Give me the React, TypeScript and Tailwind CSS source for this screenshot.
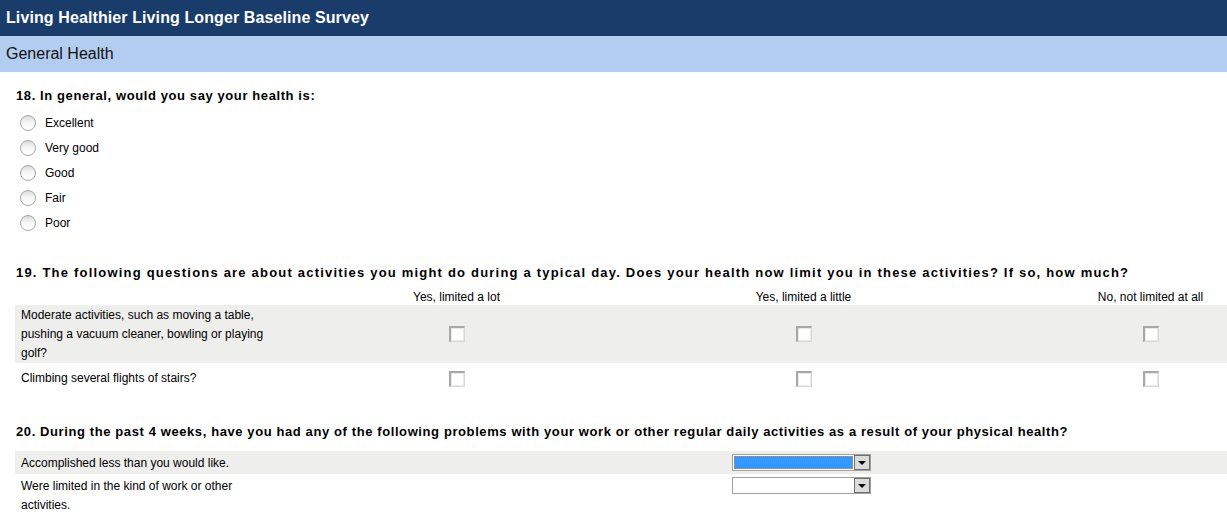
import React from "react";

const Radio = () => (
  <span className="inline-block w-[16px] h-[16px] rounded-full border border-[#a8a8a8] bg-gradient-to-b from-[#dcdcdc] via-[#f7f7f7] to-[#ffffff] shrink-0" />
);

const Check = () => (
  <span className="inline-block w-[16px] h-[16px] border-t-2 border-l-2 border-b border-r border-t-[#a8a8a8] border-l-[#a8a8a8] border-b-[#d8d8d8] border-r-[#d8d8d8] bg-white">
    <span className="block w-full h-full border border-[#eaeaea]" />
  </span>
);

const Select = ({ active }: { active?: boolean }) => (
  <div className="w-[139px] h-[17px] border border-[#a0a0a0] bg-white flex items-stretch box-border">
    <div className="flex-1 p-[1px]">
      {active ? (
        <div className="w-full h-full bg-[#3399ff] border border-dotted border-[#e8812a]" />
      ) : null}
    </div>
    <div className="w-[16px] bg-[#dcdcdc] border border-[#6f6f6f] flex items-center justify-center">
      <svg width="8" height="4" viewBox="0 0 8 4">
        <polygon points="0,0 8,0 4,4" fill="#000" />
      </svg>
    </div>
  </div>
);

export default function App() {
  const opts = ["Excellent", "Very good", "Good", "Fair", "Poor"];
  return (
    <div className="w-[1227px] h-[523px] overflow-hidden bg-white text-black font-['Liberation_Sans',Arial,sans-serif]">
      <div className="h-[36px] bg-[#1a3c6a] flex items-center px-[6px]">
        <span className="text-white font-bold text-[16px] tracking-[0.1px]">Living Healthier Living Longer Baseline Survey</span>
      </div>
      <div className="h-[36px] bg-[#b3cdf1] flex items-center px-[6px]">
        <span className="text-[16px] text-[#111]">General Health</span>
      </div>

      <div className="pl-[16px] pt-[16px]">
        <div className="text-[13px] font-bold leading-[16px] tracking-[0.6px]">18. In general, would you say your health is:</div>
        <div className="mt-[6px] flex flex-col">
          {opts.map((o) => (
            <div key={o} className="h-[25px] flex items-center pl-[4px] gap-[9px]">
              <Radio />
              <span className="text-[12px]">{o}</span>
            </div>
          ))}
        </div>
      </div>

      <div className="pl-[16px] pt-[30px]">
        <div className="text-[13px] font-bold leading-[16px] tracking-[1.2px] whitespace-nowrap">
          19. The following questions are about activities you might do during a typical day. Does your health now limit you in these activities? If so, how much?
        </div>
      </div>
      <div className="pl-[15px] mt-[8px] w-[1330px]">
        <div className="grid grid-cols-[268px_347px_347px_347px] text-[12px]">
          <div className="h-[16px]" />
          <div className="h-[16px] text-center leading-[16px]">Yes, limited a lot</div>
          <div className="h-[16px] text-center leading-[16px]">Yes, limited a little</div>
          <div className="h-[16px] text-center leading-[16px]">No, not limited at all</div>
        </div>
        <div className="grid grid-cols-[268px_347px_347px_347px] text-[12px] bg-[#eeeeec] h-[58px] items-center">
          <div className="pl-[6px] w-[256px] leading-[19px]">Moderate activities, such as moving a table, pushing a vacuum cleaner, bowling or playing golf?</div>
          <div className="flex justify-center"><Check /></div>
          <div className="flex justify-center"><Check /></div>
          <div className="flex justify-center"><Check /></div>
        </div>
        <div className="grid grid-cols-[268px_347px_347px_347px] text-[12px] h-[31px] items-center">
          <div className="pl-[6px] leading-[19px]">Climbing several flights of stairs?</div>
          <div className="flex justify-center"><Check /></div>
          <div className="flex justify-center"><Check /></div>
          <div className="flex justify-center"><Check /></div>
        </div>
      </div>

      <div className="pl-[16px] pt-[30px]">
        <div className="text-[13px] font-bold leading-[16px] tracking-[0.6px] whitespace-nowrap">
          20. During the past 4 weeks, have you had any of the following problems with your work or other regular daily activities as a result of your physical health?
        </div>
      </div>
      <div className="pl-[15px] mt-[11px]">
        <div className="flex items-center bg-[#eeeeec] h-[23px] text-[12px]">
          <div className="pl-[6px] w-[717px]">Accomplished less than you would like.</div>
          <Select active />
        </div>
        <div className="flex items-start text-[12px] pt-[3px]">
          <div className="pl-[6px] w-[717px]">
            <div className="w-[240px] leading-[19px]">Were limited in the kind of work or other activities.</div>
          </div>
          <Select />
        </div>
      </div>
    </div>
  );
}
